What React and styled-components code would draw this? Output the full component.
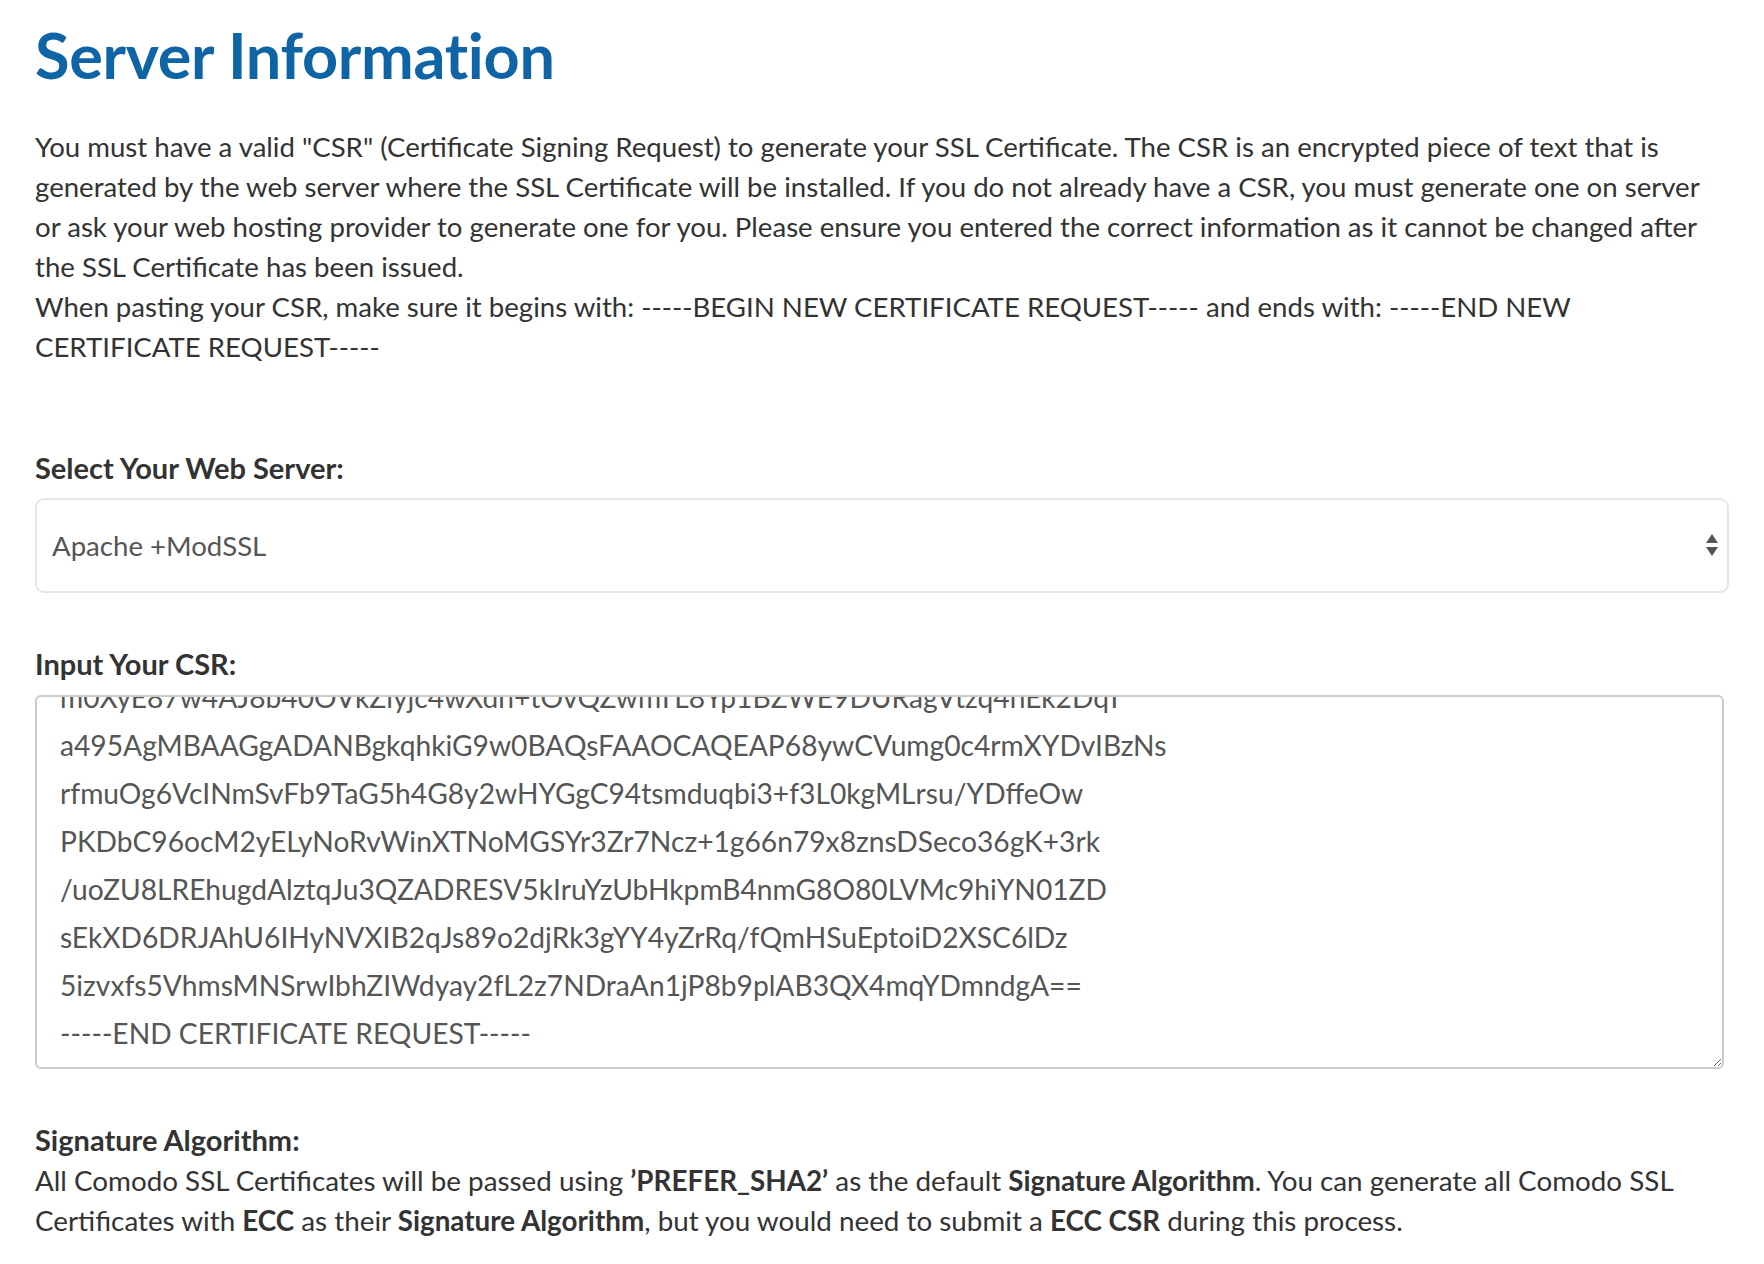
import React, { useEffect, useRef } from 'react'
import styled, { createGlobalStyle } from 'styled-components'

const GlobalStyle = createGlobalStyle`
  html, body {
    margin: 0;
    padding: 0;
    background: #ffffff;
  }
  body {
    font-family: Lato, "Open Sans", sans-serif;
    color: #333333;
  }
`

const Page = styled.div`
  padding: 17px 35px 40px 35px;
  display: flex;
  flex-direction: column;
`

const Title = styled.h1`
  margin: 0;
  font-size: 63px;
  line-height: 1.2;
  font-weight: 700;
  color: #0f64a6;
  letter-spacing: -0.3px;
`

const Intro = styled.div`
  margin-top: 34px;
  font-size: 27.6px;
  line-height: 40px;
  color: #333333;

  p {
    margin: 0;
  }
`

const Field = styled.div`
  display: flex;
  flex-direction: column;
  margin-top: ${props => props.$gap}px;
`

const Label = styled.label`
  font-size: 29px;
  line-height: 40px;
  font-weight: 700;
  color: #333333;
  margin-bottom: ${props => props.$space ?? 10}px;
`

const SelectWrap = styled.div`
  position: relative;
`

const Select = styled.select`
  appearance: none;
  -webkit-appearance: none;
  width: 100%;
  height: 95px;
  box-sizing: border-box;
  border: 2px solid #e6e6e6;
  border-radius: 9px;
  background: #ffffff;
  padding: 0 50px 0 15px;
  font-family: Lato, "Open Sans", sans-serif;
  font-size: 27.6px;
  color: #555555;
  outline: none;
`

const Arrows = styled.svg`
  position: absolute;
  right: 10px;
  top: 50%;
  transform: translateY(-50%);
  pointer-events: none;
`

const CsrHolder = styled.div`
  padding-right: 5px;
`

const CsrBox = styled.textarea`
  display: block;
  width: 100%;
  height: 374px;
  box-sizing: border-box;
  border: 2px solid #cbcbcb;
  border-radius: 6px;
  padding: 4px 20px 10px 23px;
  font-family: Lato, "Open Sans", sans-serif;
  font-size: 28.2px;
  line-height: 48px;
  color: #555555;
  white-space: pre;
  overflow: hidden;
  outline: none;
  resize: both;
  caret-color: #333333;
`

const Note = styled.div`
  margin-top: 1px;
  font-size: 27.8px;
  line-height: 40px;
  color: #333333;

  b {
    font-weight: 700;
  }
`

const csrText = `-----BEGIN CERTIFICATE REQUEST-----
MIICyjCCAbICAQAwgYQxCzAJBgNVBAYTAlVTMRMwEQYDVQQIDApDYWxpZm9ybmlh
MRYwFAYDVQQHDA1TYW4gRnJhbmNpc2NvMRUwEwYDVQQKDAxFeGFtcGxlIEluYy4x
CzAJBgNVBAsMAklUMR4wHAYDVQQDDBV3d3cuZXhhbXBsZS1zaXRlLmNvbTCCASIw
DQYJKoZIhvcNAQEBBQADggEPADCCAQoCggEBAL6Yw0Jq3nH1bW2kCu9d7fRk5s
m0XyE87w4AJ8b40OVkZiyjc4wXdn+tOvQZwmTL8Yp1BZWE9DURagVtzq4nEk2DqT
a495AgMBAAGgADANBgkqhkiG9w0BAQsFAAOCAQEAP68ywCVumg0c4rmXYDvIBzNs
rfmuOg6VcINmSvFb9TaG5h4G8y2wHYGgC94tsmduqbi3+f3L0kgMLrsu/YDffeOw
PKDbC96ocM2yELyNoRvWinXTNoMGSYr3Zr7Ncz+1g66n79x8znsDSeco36gK+3rk
/uoZU8LREhugdAlztqJu3QZADRESV5kIruYzUbHkpmB4nmG8O80LVMc9hiYN01ZD
sEkXD6DRJAhU6IHyNVXIB2qJs89o2djRk3gYY4yZrRq/fQmHSuEptoiD2XSC6lDz
5izvxfs5VhmsMNSrwIbhZIWdyay2fL2z7NDraAn1jP8b9plAB3QX4mqYDmndgA==
-----END CERTIFICATE REQUEST-----`

const App = () => {
  const csrRef = useRef(null)

  useEffect(() => {
    const el = csrRef.current
    if (!el) return
    el.focus()
    el.setSelectionRange(csrText.length, csrText.length)
    el.scrollTop = el.scrollHeight
  }, [])

  return (
    <>
      <GlobalStyle />
      <Page>
        <Title>Server Information</Title>
        <Intro>
          <p>
            You must have a valid "CSR" (Certificate Signing Request) to generate your SSL Certificate. The CSR is an encrypted piece of text that is generated by the web server where the SSL Certificate will be installed. If you do not already have a CSR, you must generate one on server or ask your web hosting provider to generate one for you. Please ensure you entered the correct information as it cannot be changed after the SSL Certificate has been issued.
          </p>
          <p>
            When pasting your CSR, make sure it begins with: -----BEGIN NEW CERTIFICATE REQUEST----- and ends with: -----END NEW CERTIFICATE REQUEST-----
          </p>
        </Intro>

        <Field $gap={81}>
          <Label htmlFor="server">Select Your Web Server:</Label>
          <SelectWrap>
            <Select id="server" defaultValue="apache">
              <option value="apache">Apache +ModSSL</option>
              <option value="iis">Microsoft IIS</option>
              <option value="nginx">Nginx</option>
              <option value="other">Other</option>
            </Select>
            <Arrows width="14" height="26" viewBox="0 0 14 26">
              <polygon points="7,2 13,11 1,11" fill="#555555" />
              <polygon points="1,15 13,15 7,24" fill="#555555" />
            </Arrows>
          </SelectWrap>
        </Field>

        <Field $gap={51}>
          <Label htmlFor="csr" $space={11}>Input Your CSR:</Label>
          <CsrHolder>
            <CsrBox id="csr" ref={csrRef} defaultValue={csrText} spellCheck={false} />
          </CsrHolder>
        </Field>

        <Field $gap={51}>
          <Label $space={0}>Signature Algorithm:</Label>
          <Note>
            All Comodo SSL Certificates will be passed using <b>’PREFER_SHA2’</b> as the default <b>Signature Algorithm</b>. You can generate all Comodo SSL Certificates with <b>ECC</b> as their <b>Signature Algorithm</b>, but you would need to submit a <b>ECC CSR</b> during this process.
          </Note>
        </Field>
      </Page>
    </>
  )
}

export default App
